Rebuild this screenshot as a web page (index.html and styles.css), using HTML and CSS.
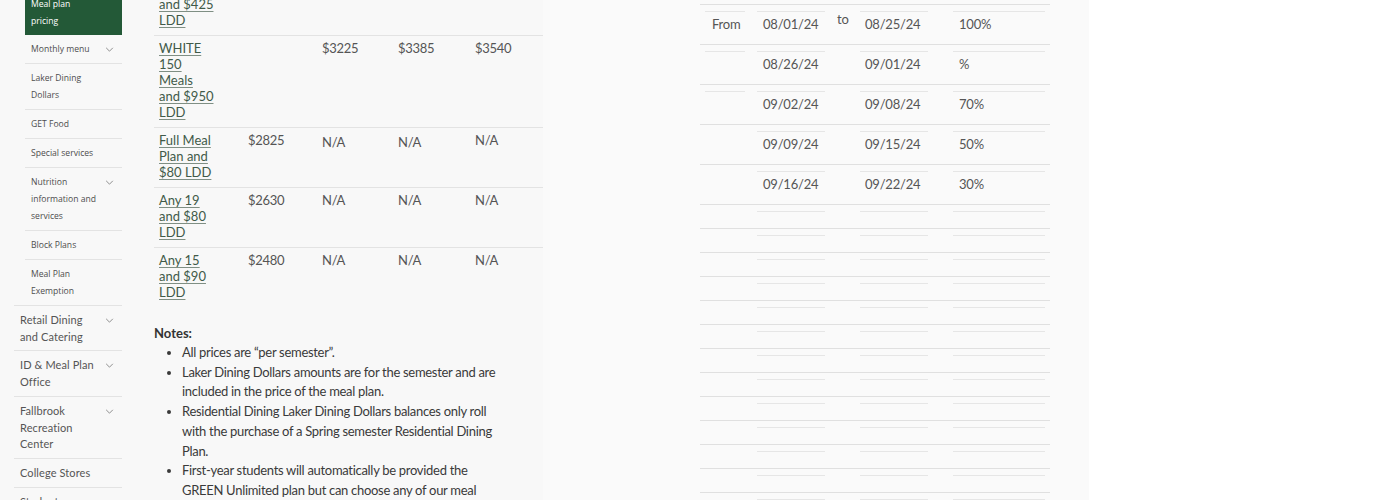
FILE: index.html
```html
<!DOCTYPE html>
<html lang="en">
<head>
<meta charset="utf-8">
<title>Meal plan pricing</title>
<link rel="stylesheet" href="styles.css">
</head>
<body>
<div class="page">
  <div class="left-panel">
    <nav class="sidebar">
      <ul class="nav">
        <li class="nav-parent">
          <ul class="subnav">
            <li class="sub active"><span class="label">Meal plan pricing</span></li>
            <li class="sub"><span class="label">Monthly menu</span><svg class="chev" viewBox="0 0 10 6"><polyline points="1,1 5,5 9,1"/></svg></li>
            <li class="sub"><span class="label">Laker Dining Dollars</span></li>
            <li class="sub"><span class="label">GET Food</span></li>
            <li class="sub"><span class="label">Special services</span></li>
            <li class="sub"><span class="label">Nutrition information and services</span><svg class="chev" viewBox="0 0 10 6"><polyline points="1,1 5,5 9,1"/></svg></li>
            <li class="sub"><span class="label">Block Plans</span></li>
            <li class="sub last"><span class="label">Meal Plan Exemption</span></li>
          </ul>
        </li>
        <li class="nav-item"><span class="label">Retail Dining and Catering</span><svg class="chev" viewBox="0 0 10 6"><polyline points="1,1 5,5 9,1"/></svg></li>
        <li class="nav-item"><span class="label">ID &amp; Meal Plan Office</span><svg class="chev" viewBox="0 0 10 6"><polyline points="1,1 5,5 9,1"/></svg></li>
        <li class="nav-item"><span class="label">Fallbrook Recreation Center</span><svg class="chev" viewBox="0 0 10 6"><polyline points="1,1 5,5 9,1"/></svg></li>
        <li class="nav-item"><span class="label">College Stores</span></li>
        <li class="nav-item"><span class="label">Student Services</span><svg class="chev" viewBox="0 0 10 6"><polyline points="1,1 5,5 9,1"/></svg></li>
      </ul>
    </nav>
    <main class="content">
      <table class="plans">
        <colgroup>
          <col class="w1"><col class="w2"><col class="w3"><col class="w4"><col class="w5">
        </colgroup>
        <tbody>
          <tr><td class="plan"><a href="#">GOLD 175 Meals and $425 LDD</a></td><td></td><td>$2975</td><td>$3135</td><td>$3290</td></tr>
          <tr><td class="plan"><a href="#">WHITE 150 Meals and $950 LDD</a></td><td></td><td>$3225</td><td>$3385</td><td>$3540</td></tr>
          <tr><td class="plan"><a href="#">Full Meal Plan and $80 LDD</a></td><td>$2825</td><td class="na">N/A</td><td class="na">N/A</td><td>N/A</td></tr>
          <tr><td class="plan"><a href="#">Any 19 and $80 LDD</a></td><td>$2630</td><td>N/A</td><td>N/A</td><td>N/A</td></tr>
          <tr><td class="plan"><a href="#">Any 15 and $90 LDD</a></td><td>$2480</td><td>N/A</td><td>N/A</td><td>N/A</td></tr>
        </tbody>
      </table>
      <div class="notes">
        <p class="notes-title">Notes:</p>
        <ul>
          <li>All prices are “per semester”.</li>
          <li>Laker Dining Dollars amounts are for the semester and are included in the price of the meal plan.</li>
          <li>Residential Dining Laker Dining Dollars balances only roll with the purchase of a Spring semester Residential Dining Plan.</li>
          <li>First-year students will automatically be provided the GREEN Unlimited plan but can choose any of our meal plans.</li>
        </ul>
      </div>
    </main>
  </div>
  <div class="mid-panel">
    <div class="schedule">
      <div class="srow"><div class="cell c1">From</div><div class="cell c2">08/01/24</div><div class="cell to">to</div><div class="cell c4">08/25/24</div><div class="cell c5">100%</div></div>
      <div class="srow"><div class="cell c1"></div><div class="cell c2">08/26/24</div><div class="cell to"></div><div class="cell c4">09/01/24</div><div class="cell c5">%</div></div>
      <div class="srow"><div class="cell c1"></div><div class="cell c2">09/02/24</div><div class="cell to"></div><div class="cell c4">09/08/24</div><div class="cell c5">70%</div></div>
      <div class="srow"><div class="cell c1 noline"></div><div class="cell c2">09/09/24</div><div class="cell to"></div><div class="cell c4">09/15/24</div><div class="cell c5">50%</div></div>
      <div class="srow"><div class="cell c1 noline"></div><div class="cell c2">09/16/24</div><div class="cell to"></div><div class="cell c4">09/22/24</div><div class="cell c5">30%</div></div>
      <div class="srow empty"><div class="cell c1 noline"></div><div class="cell c2"></div><div class="cell to"></div><div class="cell c4"></div><div class="cell c5"></div></div>
      <div class="srow empty"><div class="cell c1 noline"></div><div class="cell c2"></div><div class="cell to"></div><div class="cell c4"></div><div class="cell c5"></div></div>
      <div class="srow empty"><div class="cell c1 noline"></div><div class="cell c2"></div><div class="cell to"></div><div class="cell c4"></div><div class="cell c5"></div></div>
      <div class="srow empty"><div class="cell c1 noline"></div><div class="cell c2"></div><div class="cell to"></div><div class="cell c4"></div><div class="cell c5"></div></div>
      <div class="srow empty"><div class="cell c1 noline"></div><div class="cell c2"></div><div class="cell to"></div><div class="cell c4"></div><div class="cell c5"></div></div>
      <div class="srow empty"><div class="cell c1 noline"></div><div class="cell c2"></div><div class="cell to"></div><div class="cell c4"></div><div class="cell c5"></div></div>
      <div class="srow empty"><div class="cell c1 noline"></div><div class="cell c2"></div><div class="cell to"></div><div class="cell c4"></div><div class="cell c5"></div></div>
      <div class="srow empty"><div class="cell c1 noline"></div><div class="cell c2"></div><div class="cell to"></div><div class="cell c4"></div><div class="cell c5"></div></div>
      <div class="srow empty"><div class="cell c1 noline"></div><div class="cell c2"></div><div class="cell to"></div><div class="cell c4"></div><div class="cell c5"></div></div>
      <div class="srow empty"><div class="cell c1 noline"></div><div class="cell c2"></div><div class="cell to"></div><div class="cell c4"></div><div class="cell c5"></div></div>
      <div class="srow empty"><div class="cell c1 noline"></div><div class="cell c2"></div><div class="cell to"></div><div class="cell c4"></div><div class="cell c5"></div></div>
      <div class="srow empty"><div class="cell c1 noline"></div><div class="cell c2"></div><div class="cell to"></div><div class="cell c4"></div><div class="cell c5"></div></div>
      <div class="srow empty"><div class="cell c1 noline"></div><div class="cell c2"></div><div class="cell to"></div><div class="cell c4"></div><div class="cell c5"></div></div>
    </div>
  </div>
</div>
</body>
</html>
```

FILE: styles.css
```css
* { box-sizing: border-box; }

html, body {
  margin: 0;
  padding: 0;
  background: #ffffff;
  font-family: Lato, "Liberation Sans", sans-serif;
}

.page {
  display: flex;
  height: 500px;
  overflow: hidden;
}

.left-panel {
  width: 543px;
  flex: none;
  background: #f8f8f8;
  display: flex;
  align-items: flex-start;
}

.mid-panel {
  width: 546px;
  flex: none;
  background: #fafafa;
}

/* ---------- sidebar ---------- */
.sidebar {
  width: 108px;
  margin-left: 14px;
  margin-top: -10px;
  flex: none;
}

.nav, .subnav {
  list-style: none;
  margin: 0;
  padding: 0;
}

.nav-parent {
  border-bottom: 1px solid #e3e3e3;
}

.subnav {
  margin-left: 11px;
}

.sub {
  display: flex;
  justify-content: space-between;
  align-items: flex-start;
  padding: 6px 0 5px 6px;
  border-bottom: 1px solid #e3e3e3;
  font-family: "Open Sans", "Liberation Sans", sans-serif;
  font-size: 8.6px;
  line-height: 17px;
  color: #4d4d4d;
}

.sub .label {
  max-width: 66px;
}

.sub.active {
  background: #235937;
  color: #ffffff;
  border-bottom: none;
}

.sub.last {
  border-bottom: none;
}

.nav-item {
  display: flex;
  justify-content: space-between;
  align-items: flex-start;
  padding: 6px 0 5px 6px;
  border-bottom: 1px solid #e3e3e3;
  font-size: 11px;
  line-height: 16.7px;
  letter-spacing: 0.1px;
  color: #555555;
}

.nav-item .label {
  max-width: 80px;
}

.chev {
  width: 9px;
  height: 5px;
  margin-top: 6px;
  margin-right: 8px;
  flex: none;
  fill: none;
  stroke: #7a7a7a;
  stroke-width: 1;
}

/* ---------- main table ---------- */
.content {
  width: 389px;
  margin-left: 32px;
  margin-top: -57px;
  flex: none;
}

.plans {
  width: 389px;
  border-collapse: collapse;
  table-layout: fixed;
}

.w1 { width: 89px; }
.w2 { width: 74px; }
.w3 { width: 76px; }
.w4 { width: 77px; }
.w5 { width: 73px; }

.plans td {
  vertical-align: top;
  padding: 4px 5px 7px;
  border-top: 1px solid #e3e3e3;
  font-size: 13px;
  line-height: 16px;
  letter-spacing: -0.3px;
  color: #555555;
}

.plans td.plan {
  padding-right: 28px;
  letter-spacing: 0;
}

.plans td.na {
  padding-top: 6px;
}

.plans a {
  color: #415a49;
  text-decoration: underline;
  text-decoration-color: #7f8f84;
  text-underline-offset: 2px;
}

.notes-title {
  margin: 16px 0 0;
  font-size: 13px;
  line-height: 20px;
  font-weight: bold;
  color: #333333;
}

.notes ul {
  margin: 0;
  padding-left: 28px;
  width: 351px;
  font-size: 13px;
  line-height: 19.7px;
  letter-spacing: -0.3px;
  color: #3a3a3a;
}

/* ---------- schedule ---------- */
.schedule {
  width: 350px;
  margin: 4px 0 0 157px;
}

.srow {
  display: flex;
  border-top: 1px solid #e0e0e0;
  padding: 6px 5px 0;
}

.cell {
  border-top: 1px solid #e6e6e6;
  padding: 4px 0 12px 6px;
  font-size: 13px;
  line-height: 16px;
  letter-spacing: -0.2px;
  color: #555555;
  flex: none;
}

.c1 { width: 40px; padding-left: 7px; }
.c2 { width: 68px; margin-left: 12px; }
.to { width: 25px; margin-left: 5px; border-top-color: transparent; padding: 0 0 0 7px; margin-top: -1px; }
.c4 { width: 68px; margin-left: 5px; padding-left: 5px; }
.c5 { width: 92px; margin-left: 25px; }

.noline { border-top-color: transparent; }

.srow.empty .cell {
  padding: 0;
  height: 17px;
}
```
